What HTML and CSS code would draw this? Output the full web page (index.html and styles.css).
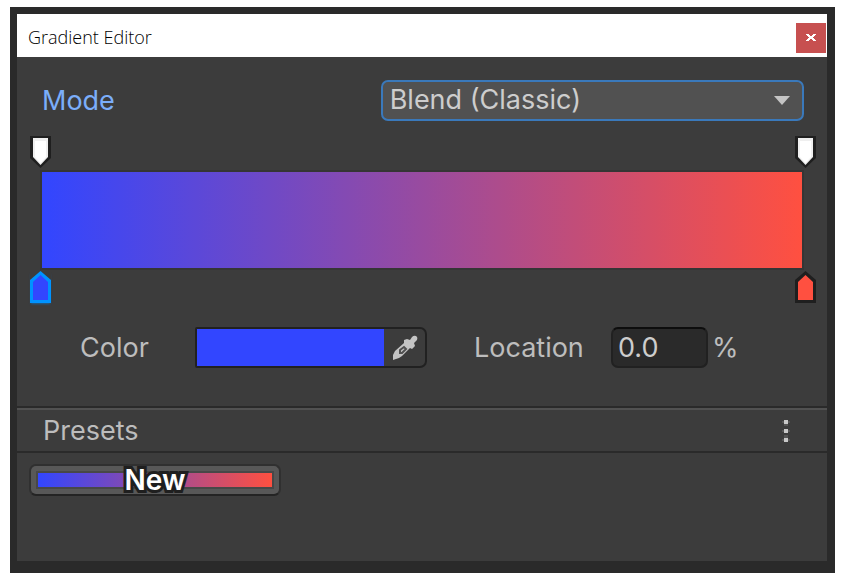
FILE: index.html
```html
<!DOCTYPE html>
<html lang="en">
<head>
<meta charset="utf-8">
<title>Gradient Editor</title>
<link rel="stylesheet" href="styles.css">
</head>
<body>
<main class="window">
  <header class="titlebar">
    <h1 class="title">Gradient Editor</h1>
    <button class="close" type="button" aria-label="Close">
      <svg width="10" height="7" viewBox="0 0 10 7" shape-rendering="crispEdges"><path fill="#fff" d="M0 0h3v1h1v1h2v-1h1v-1h3v1h-1v1h-1v1h-1v1h1v1h1v1h1v1h-3v-1h-1v-1h-2v1h-1v1h-3v-1h1v-1h1v-1h1v-1h-1v-1h-1v-1h-1z"/></svg>
    </button>
  </header>

  <section class="editor">
    <div class="mode-row">
      <label class="mode-label" for="mode">Mode</label>
      <div class="select-wrap">
        <select class="mode-select" id="mode"><option>Blend (Classic)</option></select>
        <svg class="caret" width="18" height="11" viewBox="0 0 18 11"><path fill="#c4c4c4" d="M1 1h16L9 10z"/></svg>
      </div>
    </div>

    <div class="keys">
      <button class="key" type="button" aria-label="Start alpha key">
        <svg width="21" height="32" viewBox="0 0 21 32"><path fill="#1f1f1f" d="M0 0h21v22L10.500 32 0 22z"/><path fill="#efefef" d="M3 2h15v19l-7.500 8L3 21z"/><path fill="#fff" d="M5 5h11v16l-5.500 6L5 21z"/></svg>
      </button>
      <button class="key" type="button" aria-label="End alpha key">
        <svg width="21" height="32" viewBox="0 0 21 32"><path fill="#1f1f1f" d="M0 0h21v22L10.500 32 0 22z"/><path fill="#efefef" d="M3 2h15v19l-7.500 8L3 21z"/><path fill="#fff" d="M5 5h11v16l-5.500 6L5 21z"/></svg>
      </button>
    </div>
    <div class="gradient"></div>
    <div class="keys">
      <button class="key key-selected" type="button" aria-label="Start color key">
        <svg width="21" height="32" viewBox="0 0 21 32"><path fill="#0093ff" d="M0 32h21V9L10.500 0 0 9z"/><path fill="#3246ff" d="M3 29h15V11l-7.500-7L3 11z"/></svg>
      </button>
      <button class="key" type="button" aria-label="End color key">
        <svg width="21" height="32" viewBox="0 0 21 32"><path fill="#1f1f1f" d="M0 32h21V9L10.500 0 0 9z"/><path fill="#ff5040" d="M3 29h15V11l-7.500-7L3 11z"/></svg>
      </button>
    </div>

    <div class="value-row">
      <span class="color-label" id="color-label">Color</span>
      <div class="color-field" role="group" aria-labelledby="color-label">
        <button class="swatch" type="button" aria-label="Pick color"></button>
        <button class="dropper" type="button" aria-label="Eyedropper">
          <svg width="26" height="26" viewBox="0 0 26 26"><path fill="#c4c4c4" d="M12 5l3-1 3 1 2-3q2-2 4-1t1 4l-3 3 1 3-3 3-2-1-8 8-3 2-6 2v-5l2-4 9-8z"/><path fill="none" stroke="#505050" stroke-width="2" d="M8 15l4-3 2 2-4 4h-2z"/></svg>
        </button>
      </div>
      <label class="location-label" for="location">Location</label>
      <input class="location" id="location" type="text" value="0.0">
      <span class="unit">%</span>
    </div>
  </section>

  <section class="presets">
    <header class="presets-head">
      <h2 class="presets-title">Presets</h2>
      <button class="menu" type="button" aria-label="Presets menu">
        <svg width="8" height="22" viewBox="0 0 8 22" shape-rendering="crispEdges"><path fill="#555" d="M0 1h8v2H0zM0 10h8v2H0zM0 19h8v2H0zM2 0h4v6H2zM2 15h4v3H2z"/><path fill="#c8c8c8" d="M2 0h4v4H2zM2 9h4v4H2zM2 18h4v4H2z"/></svg>
      </button>
    </header>
    <div class="presets-body">
      <button class="preset" type="button"><span class="preset-name">New</span></button>
    </div>
  </section>
</main>
</body>
</html>
```
FILE: styles.css
```css
* {
  box-sizing: border-box;
}

body {
  margin: 0;
  padding: 7px 10px;
  min-height: 100vh;
  display: flex;
  background: #fff;
  color: #bdbdbd;
  font: 400 27px/32px Inter, "Liberation Sans", sans-serif;
}

button,
input,
select {
  margin: 0;
  padding: 0;
  border: 0;
  background: none;
  color: inherit;
  font: inherit;
}

button {
  display: block;
}

svg {
  display: block;
}

h1,
h2 {
  margin: 0;
}

.window {
  flex: 1;
  display: flex;
  flex-direction: column;
  border: solid #2a2a2a;
  border-width: 7px 8px 12px 7px;
  background: #3c3c3c;
}

.titlebar {
  display: flex;
  align-items: center;
  justify-content: space-between;
  height: 43px;
  padding: 4px 1px 0 11px;
  background: #fff;
  color: #000;
}

.title {
  padding-bottom: 2px;
  font: 300 18px/24px "Open Sans", "Noto Sans", sans-serif;
}

.close {
  display: grid;
  place-items: center;
  width: 30px;
  height: 30px;
  background: #c75050;
}

.editor {
  padding: 23px 11px 38px 13px;
}

.mode-row {
  display: flex;
  align-items: center;
  padding: 0 12px;
}

.mode-label {
  flex: 4;
  color: #7baefa;
}

.select-wrap {
  position: relative;
  flex: 5;
}

.mode-select {
  display: block;
  appearance: none;
  width: 100%;
  height: 41px;
  padding: 0 7px 2px;
  border: 2px solid #3a79bb;
  border-radius: 7px;
  background: #515151;
  color: #cdcdcd;
}

.caret {
  position: absolute;
  top: 15px;
  right: 13px;
  pointer-events: none;
}

.keys {
  display: flex;
  justify-content: space-between;
}

.mode-row + .keys {
  margin-top: 15px;
}

.key-selected {
  box-shadow: 0 2px 2px -1px #1d6299;
}

.gradient {
  height: 100px;
  margin: 2px 12px 1px 10px;
  border: 2px solid #353535;
  background: linear-gradient(90deg, #3246ff, #ff5040);
}

.value-row {
  display: flex;
  align-items: center;
  height: 41px;
  margin-top: 24px;
  padding-left: 50px;
}

.color-label {
  width: 115px;
}

.color-field {
  display: flex;
  width: 232px;
  height: 41px;
  border: 2px solid #212121;
  border-radius: 2px 7px 7px 2px;
}

.swatch {
  flex: 1;
  background: #3246ff;
}

.dropper {
  display: grid;
  place-items: center;
  width: 41px;
}

.location-label {
  width: 137px;
  margin-left: 47px;
}

.location {
  width: 97px;
  height: 41px;
  padding: 0 5px;
  border: 2px solid #212121;
  border-top-color: #0d0d0d;
  border-radius: 7px;
  background: #2a2a2a;
  color: #cdcdcd;
}

.unit {
  margin-left: 4px;
}

.presets-head {
  display: flex;
  align-items: center;
  justify-content: space-between;
  height: 47px;
  padding: 2px 37px 0 26px;
  border: solid #2a2a2a;
  border-width: 2px 0;
  box-shadow: inset 0 2px #515151;
}

.presets-title {
  font-size: 27px;
  font-weight: 400;
}

.presets-body {
  padding: 11px 12px;
}

.preset {
  width: 252px;
  height: 32px;
  padding: 5px;
  border: 2px solid #303030;
  border-bottom-color: #242424;
  border-radius: 7px;
  background: #585858;
}

.preset-name {
  display: block;
  height: 18px;
  border: 2px solid #484848;
  background: linear-gradient(90deg, #3246ff, #ff5040);
  color: #fff;
  font-size: 28px;
  font-weight: 600;
  line-height: 15px;
  -webkit-text-stroke: 6px #1f1f1f;
  paint-order: stroke fill;
}
```
